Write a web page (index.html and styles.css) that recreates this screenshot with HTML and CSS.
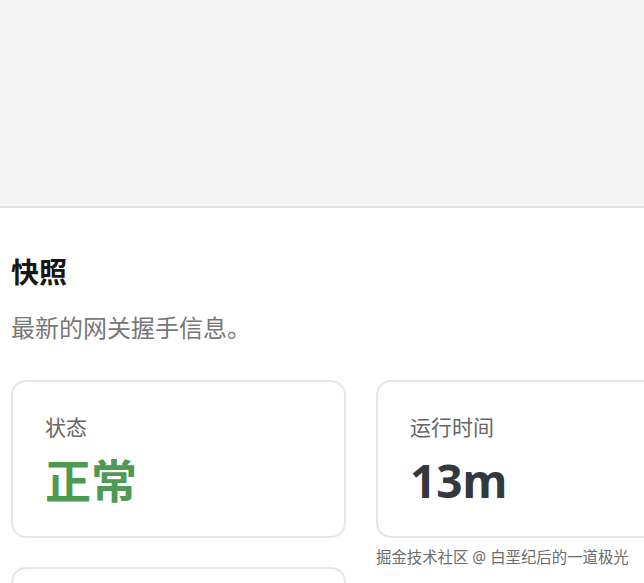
FILE: index.html
```html
<!DOCTYPE html>
<html lang="zh-CN">
<head>
  <meta charset="UTF-8" />
  <meta name="viewport" content="width=device-width, initial-scale=1.0" />
  <title>快照</title>
  <link rel="stylesheet" href="styles.css">
</head>
<body>
  <!-- Zona superior -->
  <div class="top-area"></div>

  <div class="content">
    <h2 class="section-title">快照</h2>
    <p class="section-desc">最新的网关握手信息。</p>

    <div class="stats-grid">
      <div class="stat-card">
        <div class="stat-label">状态</div>
        <div class="stat-value ok">正常</div>
      </div>
      <div class="stat-card">
        <div class="stat-label">运行时间</div>
        <div class="stat-value">13m</div>
      </div>
      <div class="stat-card"></div>
    </div>
  </div>

  <div class="watermark">掘金技术社区 @ 白垩纪后的一道极光</div>
</body>
</html>
```

FILE: styles.css
```css
body {
  font-family: "Noto Sans", "Noto Sans CJK SC", sans-serif;
  margin: 0;
  padding: 0;
  background: #fff;
  color: #1a1a1a;
  overflow: hidden;
  position: relative;
  height: 583px;
}
.top-area {
  height: 206px;
  background: #f5f5f5;
  border-bottom: 2px solid #e2e2e2;
}
.content {
  padding: 0 11px;
}
.section-title {
  font-size: 28px;
  font-weight: 700;
  line-height: 36px;
  margin: 46px 0 0;
  color: #151515;
}
.section-desc {
  font-size: 24px;
  line-height: 32px;
  margin: 22px 0 0;
  color: #777;
}
.stats-grid {
  display: grid;
  grid-template-columns: 335px 335px;
  column-gap: 30px;
  row-gap: 29px;
  margin-top: 36px;
}
.stat-card {
  box-sizing: border-box;
  height: 158px;
  border: 2px solid #e6e6e6;
  border-radius: 15px;
  padding: 30px 32px 0;
  background: #fff;
}
.stat-label {
  font-size: 21px;
  line-height: 30px;
  color: #666;
}
.stat-value {
  font-size: 46px;
  font-weight: 700;
  line-height: 60px;
  margin-top: 8px;
  color: #33383c;
}
.stat-value.ok {
  color: #4e9a52;
}
.watermark {
  position: absolute;
  left: 376px;
  top: 548px;
  font-size: 15.4px;
  line-height: 20px;
  color: #6c6c6c;
  white-space: nowrap;
  text-shadow: 0 0 2px #fff;
}
```
